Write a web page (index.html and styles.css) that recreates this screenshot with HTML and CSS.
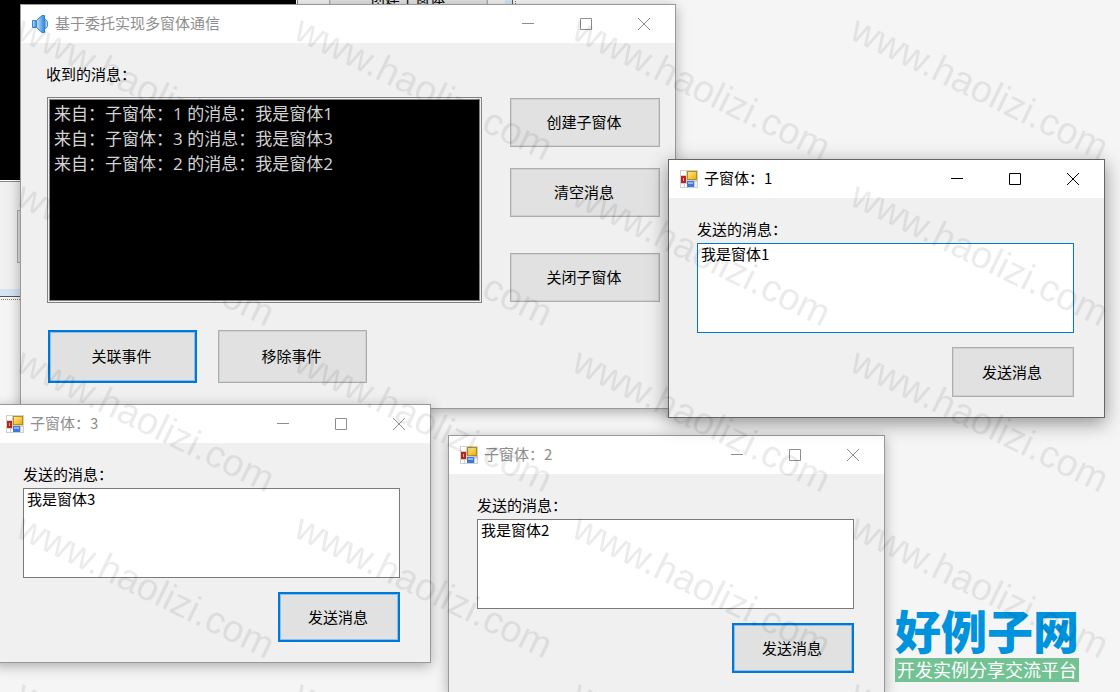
FILE: index.html
```html
<!DOCTYPE html>
<html lang="zh-CN">
<head>
    <meta charset="UTF-8">
    <meta name="viewport" content="width=device-width, initial-scale=1.0">
    <title>基于委托实现多窗体通信</title>
    <link rel="stylesheet" href="styles.css">
</head>
<body>

    <!-- Shared icons -->
    <svg class="defs" aria-hidden="true">
        <defs>
            <linearGradient id="yellow" x1="0" y1="0" x2="1" y2="1">
                <stop offset="0" stop-color="#ffe88a"/>
                <stop offset="1" stop-color="#eab010"/>
            </linearGradient>
            <linearGradient id="blue" x1="0" y1="0" x2="1" y2="0">
                <stop offset="0" stop-color="#c4e6fd"/>
                <stop offset="1" stop-color="#2f86e0"/>
            </linearGradient>
        </defs>
        <symbol id="icon-form" viewBox="0 0 18 18">
            <rect width="18" height="18" fill="#cfcfcf"/>
            <rect x="1" y="1" width="5" height="4" fill="#fff"/>
            <rect x="1" y="14" width="3" height="3" fill="#fff"/>
            <rect x="5" y="14" width="2" height="3" fill="#fff"/>
            <rect x="15" y="12" width="2" height="5" fill="#f2f2f2"/>
            <rect x="1" y="6" width="5" height="7" fill="#b8251b"/>
            <rect x="3" y="8" width="1" height="3" fill="#f0a59c"/>
            <rect x="7" y="1" width="10" height="9" fill="#b98c14"/>
            <rect x="8" y="2" width="8" height="7" fill="url(#yellow)"/>
            <rect x="7" y="11" width="7" height="6" fill="#3f78d8"/>
            <rect x="8" y="12" width="5" height="2" fill="#8ab8f6"/>
        </symbol>
        <symbol id="icon-min" viewBox="0 0 12 12">
            <path d="M0 5.5h12" stroke="currentColor"/>
        </symbol>
        <symbol id="icon-max" viewBox="0 0 12 12">
            <path d="M.5.5h11v11H.5z" fill="none" stroke="currentColor"/>
        </symbol>
        <symbol id="icon-close" viewBox="0 0 12 12">
            <path d="M0 0l12 12M12 0L0 12" stroke="currentColor"/>
        </symbol>
    </svg>

    <main class="desktop">

        <!-- Form designer behind the windows -->
        <div class="designer">
            <div class="designer-log"></div>
            <button class="btn designer-create" type="button">创建子窗体</button>
            <div class="designer-link"></div>
        </div>

        <!-- Main form -->
        <section class="window main-form">
            <header class="titlebar">
                <svg class="app-icon" viewBox="0 0 18 18" aria-hidden="true">
                    <path d="M1.500 5.500h4v7h-4z" fill="url(#blue)" stroke="#3a86d4"/>
                    <path d="M5.500 5.500L11 .5h2.500v17H11l-5.500-5z" fill="url(#blue)" stroke="#3a80cc"/>
                    <path d="M14 4.500h1l1.500 2.500v4L15 13.500h-1z" fill="#a9d5f8" stroke="#4a90d8"/>
                </svg>
                <h1 class="title">基于委托实现多窗体通信</h1>
                <button class="ctl" type="button" aria-label="最小化"><svg><use href="#icon-min"/></svg></button>
                <button class="ctl" type="button" aria-label="最大化"><svg><use href="#icon-max"/></svg></button>
                <button class="ctl" type="button" aria-label="关闭"><svg><use href="#icon-close"/></svg></button>
            </header>
            <div class="main-body">
                <label class="label" for="log">收到的消息：</label>
                <div class="log-row">
                    <textarea id="log" class="log" readonly>来自：子窗体：1 的消息：我是窗体1
来自：子窗体：3 的消息：我是窗体3
来自：子窗体：2 的消息：我是窗体2</textarea>
                    <div class="side-buttons">
                        <button class="btn" type="button">创建子窗体</button>
                        <button class="btn" type="button">清空消息</button>
                        <button class="btn btn-last" type="button">关闭子窗体</button>
                    </div>
                </div>
                <div class="event-buttons">
                    <button class="btn btn-default" type="button">关联事件</button>
                    <button class="btn" type="button">移除事件</button>
                </div>
            </div>
        </section>

        <!-- Child forms -->
        <section class="window child child-2">
            <header class="titlebar">
                <svg class="app-icon" aria-hidden="true"><use href="#icon-form"/></svg>
                <h2 class="title">子窗体：2</h2>
                <button class="ctl" type="button" aria-label="最小化"><svg><use href="#icon-min"/></svg></button>
                <button class="ctl" type="button" aria-label="最大化"><svg><use href="#icon-max"/></svg></button>
                <button class="ctl" type="button" aria-label="关闭"><svg><use href="#icon-close"/></svg></button>
            </header>
            <form class="child-body">
                <label class="label" for="msg2">发送的消息：</label>
                <textarea id="msg2" class="message">我是窗体2</textarea>
                <button class="btn btn-send btn-default" type="button">发送消息</button>
            </form>
        </section>

        <section class="window child child-3">
            <header class="titlebar">
                <svg class="app-icon" aria-hidden="true"><use href="#icon-form"/></svg>
                <h2 class="title">子窗体：3</h2>
                <button class="ctl" type="button" aria-label="最小化"><svg><use href="#icon-min"/></svg></button>
                <button class="ctl" type="button" aria-label="最大化"><svg><use href="#icon-max"/></svg></button>
                <button class="ctl" type="button" aria-label="关闭"><svg><use href="#icon-close"/></svg></button>
            </header>
            <form class="child-body">
                <label class="label" for="msg3">发送的消息：</label>
                <textarea id="msg3" class="message">我是窗体3</textarea>
                <button class="btn btn-send btn-default" type="button">发送消息</button>
            </form>
        </section>

        <section class="window child child-1 active">
            <header class="titlebar">
                <svg class="app-icon" aria-hidden="true"><use href="#icon-form"/></svg>
                <h2 class="title">子窗体：1</h2>
                <button class="ctl" type="button" aria-label="最小化"><svg><use href="#icon-min"/></svg></button>
                <button class="ctl" type="button" aria-label="最大化"><svg><use href="#icon-max"/></svg></button>
                <button class="ctl" type="button" aria-label="关闭"><svg><use href="#icon-close"/></svg></button>
            </header>
            <form class="child-body">
                <label class="label" for="msg1">发送的消息：</label>
                <textarea id="msg1" class="message">我是窗体1</textarea>
                <button class="btn btn-send" type="button">发送消息</button>
            </form>
        </section>

        <!-- Site logo -->
        <div class="logo">
            <div class="logo-name">好例子网</div>
            <div class="logo-tag">开发实例分享交流平台</div>
        </div>

        <!-- Watermark, repeated over everything -->
        <svg class="watermark" aria-hidden="true">
            <defs>
                <pattern id="mark" width="278" height="166" patternUnits="userSpaceOnUse" x="10" y="6">
                    <text class="mark-text" transform="translate(4 32) rotate(26)">www.haolizi.com</text>
                </pattern>
            </defs>
            <rect width="100%" height="100%" fill="url(#mark)"/>
        </svg>
    </main>

</body>
</html>
```

FILE: styles.css
```css
* {
    box-sizing: border-box;
}
body {
    margin: 0;
    background-color: #f5f5f5;
    color: black;
    font-family: "Noto Sans CJK SC", sans-serif;
    font-size: 15px;
}
button, textarea {
    font: inherit;
    color: inherit;
}
.defs {
    position: absolute;
    width: 0;
    height: 0;
}
.desktop {
    position: relative;
    height: 100vh;
    overflow: hidden;
}

/* Designer */
.designer {
    position: absolute;
    left: 0;
    top: 0;
    width: 513px;
    height: 297px;
    background-color: #f0f0f0;
    border: solid #555;
    border-width: 0 1px 1px 0;
    box-shadow: inset -7px -7px 0 #d5e3f3;
    outline: 1px dotted #777;
    outline-offset: 2px;
}
.designer-log {
    width: 298px;
    height: 182px;
    background-color: black;
    border: solid #888;
    border-width: 0 1px 1px 0;
    box-shadow: inset -1px -1px 0 white;
}
.designer-create {
    position: absolute;
    left: 329px;
    top: -27px;
    width: 159px;
    height: 50px;
}
.designer-link {
    position: absolute;
    left: 17px;
    top: 210px;
    width: 150px;
    height: 53px;
    background-color: #e1e1e1;
    border: 1px solid #adadad;
}

/* Windows */
.window {
    position: absolute;
    background-color: #f0f0f0;
    border: 1px solid #999;
    box-shadow: 0 3px 12px rgba(0, 0, 0, 0.3);
}
.window.active {
    border-color: #666;
    box-shadow: 0 5px 18px rgba(0, 0, 0, 0.42);
}
.main-form {
    left: 20px;
    top: 4px;
    width: 656px;
}
.child {
    width: 437px;
}
.child-1 {
    left: 668px;
    top: 159px;
}
.child-2 {
    left: 448px;
    top: 435px;
}
.child-3 {
    left: -6px;
    top: 404px;
}
.titlebar {
    display: flex;
    align-items: center;
    height: 38px;
    padding: 0 2px 0 11px;
    background-color: white;
    color: #8e8e8e;
}
.main-form .titlebar {
    padding-left: 10px;
}
.active .titlebar {
    color: black;
}
.app-icon {
    width: 18px;
    height: 18px;
    margin-right: 6px;
}
.title {
    flex: 1;
    margin: 0;
    padding-bottom: 2px;
    font-size: 15px;
    font-weight: normal;
    line-height: 20px;
}
.ctl {
    display: flex;
    align-items: center;
    justify-content: center;
    width: 58px;
    height: 38px;
    padding: 0;
    border: none;
    background: none;
}
.ctl svg {
    width: 12px;
    height: 12px;
}
.label {
    line-height: 20px;
}

/* Buttons */
.btn {
    padding: 0 2px 2px 0;
    border: 1px solid #adadad;
    outline: 1px solid #d0d0d0;
    outline-offset: -2px;
    background-color: #e1e1e1;
}
.btn-default {
    border: 2px solid #0078d7;
    outline: 1px solid #8fbfe6;
    outline-offset: -3px;
}

/* Main form */
.main-body {
    display: flex;
    flex-direction: column;
    padding: 21px 15px 25px 25px;
}
.log-row {
    display: flex;
    gap: 28px;
    margin: 13px 0 27px;
    padding-left: 1px;
}
.log {
    flex: 1;
    height: 206px;
    padding: 1px 4px;
    border: 3px double #828282;
    outline: none;
    resize: none;
    background-color: black;
    background-clip: padding-box;
    color: #d4d4d4;
    font-family: "Open Sans", "Noto Sans CJK SC", sans-serif;
    font-size: 17px;
    line-height: 25px;
}
.side-buttons {
    display: flex;
    flex-direction: column;
    gap: 21px;
    width: 150px;
    padding-top: 1px;
}
.side-buttons .btn {
    height: 49px;
}
.side-buttons .btn-last {
    margin-top: 15px;
}
.event-buttons {
    display: flex;
    gap: 21px;
    padding-left: 2px;
}
.event-buttons .btn {
    width: 149px;
    height: 53px;
}

/* Child forms */
.child-body {
    display: flex;
    flex-direction: column;
    padding: 21px 30px 20px 28px;
}
.message {
    height: 90px;
    margin: 4px 0 14px;
    padding: 0 3px;
    border: 1px solid #7a7a7a;
    outline: none;
    resize: none;
    background-color: white;
    line-height: 20px;
}
.active .message {
    border-color: #0078d7;
}
.btn-send {
    align-self: flex-end;
    width: 122px;
    height: 50px;
}

/* Logo */
.logo {
    position: absolute;
    right: 41px;
    bottom: 10px;
}
.logo-name {
    margin-bottom: 4px;
    color: #0093dd;
    font-size: 46px;
    font-weight: 900;
    line-height: 50px;
}
.logo-tag {
    padding-bottom: 2px;
    background-color: #72c294;
    color: white;
    font-size: 18px;
    line-height: 22px;
    text-align: center;
}

/* Watermark */
.watermark {
    position: absolute;
    inset: 0;
    width: 100%;
    height: 100%;
    pointer-events: none;
}
.mark-text {
    fill: rgba(0, 0, 0, 0.08);
    font-family: "Liberation Sans", sans-serif;
    font-size: 38px;
}
```
